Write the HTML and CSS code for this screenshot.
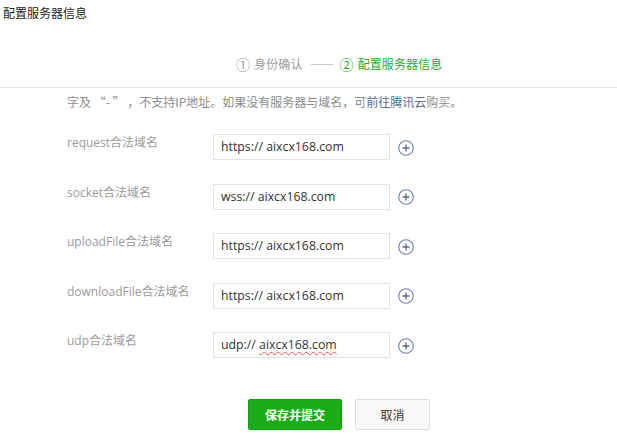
FILE: index.html
```html
<!DOCTYPE html>
<html lang="zh-CN">
<head>
<meta charset="utf-8">
<title>配置服务器信息</title>
<link rel="stylesheet" href="styles.css">
</head>
<body>
<div class="page">
  <div class="title">配置服务器信息</div>
  <div class="steps">
    <span class="step done"><span class="num">①</span>身份确认</span>
    <span class="step-line"></span>
    <span class="step active"><span class="num">②</span>配置服务器信息</span>
  </div>
  <div class="desc">字及 “- ” ，不支持IP地址。如果没有服务器与域名，可<a class="link">前往腾讯云</a>购买。</div>
  <div class="form">
    <div class="row">
      <div class="label">request合法域名</div>
      <div class="input">https:// aixcx168.com</div>
      <span class="plus"><svg width="16" height="16" viewBox="0 0 16 16"><circle cx="8" cy="8" r="7.3" fill="none" stroke="#6f7fa6" stroke-width="1.1"/><path d="M8 4.6v6.8M4.6 8h6.8" stroke="#55658f" stroke-width="1.3"/></svg></span>
    </div>
    <div class="row">
      <div class="label">socket合法域名</div>
      <div class="input">wss:// aixcx168.com</div>
      <span class="plus"><svg width="16" height="16" viewBox="0 0 16 16"><circle cx="8" cy="8" r="7.3" fill="none" stroke="#6f7fa6" stroke-width="1.1"/><path d="M8 4.6v6.8M4.6 8h6.8" stroke="#55658f" stroke-width="1.3"/></svg></span>
    </div>
    <div class="row">
      <div class="label">uploadFile合法域名</div>
      <div class="input">https:// aixcx168.com</div>
      <span class="plus"><svg width="16" height="16" viewBox="0 0 16 16"><circle cx="8" cy="8" r="7.3" fill="none" stroke="#6f7fa6" stroke-width="1.1"/><path d="M8 4.6v6.8M4.6 8h6.8" stroke="#55658f" stroke-width="1.3"/></svg></span>
    </div>
    <div class="row">
      <div class="label">downloadFile合法域名</div>
      <div class="input">https:// aixcx168.com</div>
      <span class="plus"><svg width="16" height="16" viewBox="0 0 16 16"><circle cx="8" cy="8" r="7.3" fill="none" stroke="#6f7fa6" stroke-width="1.1"/><path d="M8 4.6v6.8M4.6 8h6.8" stroke="#55658f" stroke-width="1.3"/></svg></span>
    </div>
    <div class="row">
      <div class="label">udp合法域名</div>
      <div class="input">udp:// <span class="spell">aixcx168.com</span></div>
      <span class="plus"><svg width="16" height="16" viewBox="0 0 16 16"><circle cx="8" cy="8" r="7.3" fill="none" stroke="#6f7fa6" stroke-width="1.1"/><path d="M8 4.6v6.8M4.6 8h6.8" stroke="#55658f" stroke-width="1.3"/></svg></span>
    </div>
  </div>
  <div class="actions">
    <button class="btn primary">保存并提交</button>
    <button class="btn default">取消</button>
  </div>
</div>
</body>
</html>
```
FILE: styles.css
```css
html, body {
  margin: 0;
  padding: 0;
  background: #fff;
}
body {
  font-family: "Open Sans", "Noto Sans CJK SC", sans-serif;
  font-size: 12px;
  color: #333;
}
.page {
  width: 617px;
}
.title {
  padding-left: 3px;
  line-height: 26px;
  height: 26px;
  font-size: 12px;
  color: #222;
  font-family: "Noto Sans CJK SC", sans-serif;
}
.steps {
  display: flex;
  align-items: center;
  padding: 30px 0 15px 236px;
  height: 16px;
  border-bottom: 1px solid #e6e6e6;
  font-family: "Noto Sans CJK SC", sans-serif;
  font-size: 12px;
}
.step {
  display: flex;
  align-items: center;
  line-height: 16px;
  letter-spacing: 0.1px;
}
.num {
  font-size: 14px;
  margin-right: 4px;
}
.step.done {
  color: #9a9a9a;
}
.step.active {
  color: #2aa92a;
}
.step-line {
  display: inline-block;
  width: 22px;
  height: 1px;
  background: #c8c8c8;
  margin: 1px 7px 0 8px;
}
.desc {
  padding: 6px 0 0 67px;
  line-height: 16px;
  color: #8c8c8c;
  font-family: "Noto Sans CJK SC", sans-serif;
  font-size: 12px;
  white-space: pre;
}
.link {
  color: #576b95;
}
.form {
  display: flex;
  flex-direction: column;
  gap: 23.6px;
  padding: 24px 0 0 67px;
}
.row {
  display: flex;
  align-items: flex-start;
}
.label {
  width: 146px;
  line-height: 18px;
  color: #9a9a9a;
  font-size: 12px;
}
.input {
  box-sizing: border-box;
  width: 177px;
  height: 26px;
  line-height: 24px;
  border: 1px solid #e2e2e2;
  padding-left: 7px;
  font-size: 12.3px;
  color: #333;
}
.spell {
  text-decoration: underline wavy #e05050;
  text-decoration-thickness: 1px;
  text-underline-offset: 2px;
}
.plus {
  display: block;
  width: 16px;
  height: 16px;
  margin: 5.5px 0 0 8px;
}
.plus svg {
  display: block;
}
.actions {
  display: flex;
  gap: 13px;
  padding: 40.6px 0 0 248px;
}
.btn {
  box-sizing: border-box;
  height: 31px;
  border-radius: 2px;
  font-family: "Noto Sans CJK SC", sans-serif;
  font-size: 12px;
  padding: 0;
  cursor: pointer;
}
.btn.primary {
  width: 94px;
  background: #1aad19;
  border: 1px solid #179b16;
  color: #fff;
  font-weight: bold;
}
.btn.default {
  width: 75px;
  background: #f8f8f8;
  border: 1px solid #dcdcdc;
  color: #333;
}
```
